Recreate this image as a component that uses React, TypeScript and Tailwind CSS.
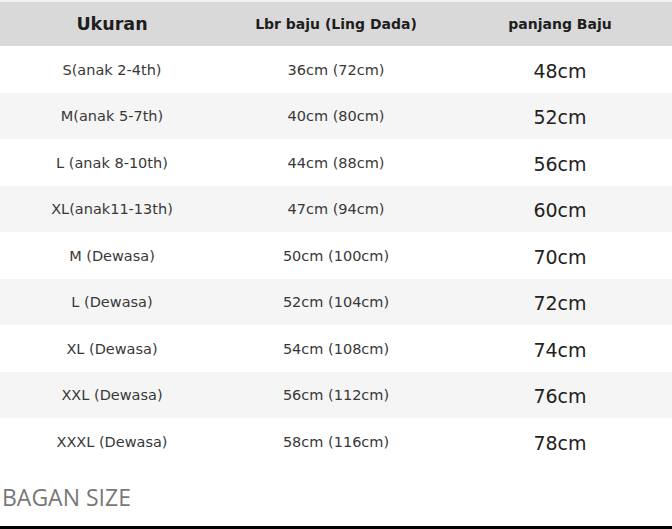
const rows = [
  ["S(anak 2-4th)", "36cm (72cm)", "48cm"],
  ["M(anak 5-7th)", "40cm (80cm)", "52cm"],
  ["L (anak 8-10th)", "44cm (88cm)", "56cm"],
  ["XL(anak11-13th)", "47cm (94cm)", "60cm"],
  ["M (Dewasa)", "50cm (100cm)", "70cm"],
  ["L (Dewasa)", "52cm (104cm)", "72cm"],
  ["XL (Dewasa)", "54cm (108cm)", "74cm"],
  ["XXL (Dewasa)", "56cm (112cm)", "76cm"],
  ["XXXL (Dewasa)", "58cm (116cm)", "78cm"],
];

export default function App() {
  return (
    <div className="w-[672px] h-[529px] bg-white flex flex-col font-['DejaVu_Sans',sans-serif] overflow-hidden">
      <div className="h-[2px] bg-[#f2f2f2]" />
      <div className="h-[44px] bg-[#d9d9d9] grid grid-cols-3 items-center text-center text-[#1e1e1e] font-bold">
        <div className="text-[17.5px]">Ukuran</div>
        <div className="text-[14px]">Lbr baju (Ling Dada)</div>
        <div className="text-[14px]">panjang Baju</div>
      </div>
      {rows.map((r, i) => (
        <div
          key={r[0]}
          className={`h-[46.5px] pt-[3px] grid grid-cols-3 items-center text-center ${i % 2 === 1 ? "bg-[#f5f5f5]" : "bg-white"}`}
        >
          <div className="text-[14.5px] text-[#383838]">{r[0]}</div>
          <div className="text-[14.5px] text-[#383838]">{r[1]}</div>
          <div className="text-[19px] text-[#222]">{r[2]}</div>
        </div>
      ))}
      <div className="flex-1 flex items-center pl-[2px] pt-[4px]">
        <span className="font-['Open_Sans',sans-serif] text-[23px] text-[#787878]">BAGAN SIZE</span>
      </div>
      <div className="h-[3px] bg-black" />
    </div>
  );
}
